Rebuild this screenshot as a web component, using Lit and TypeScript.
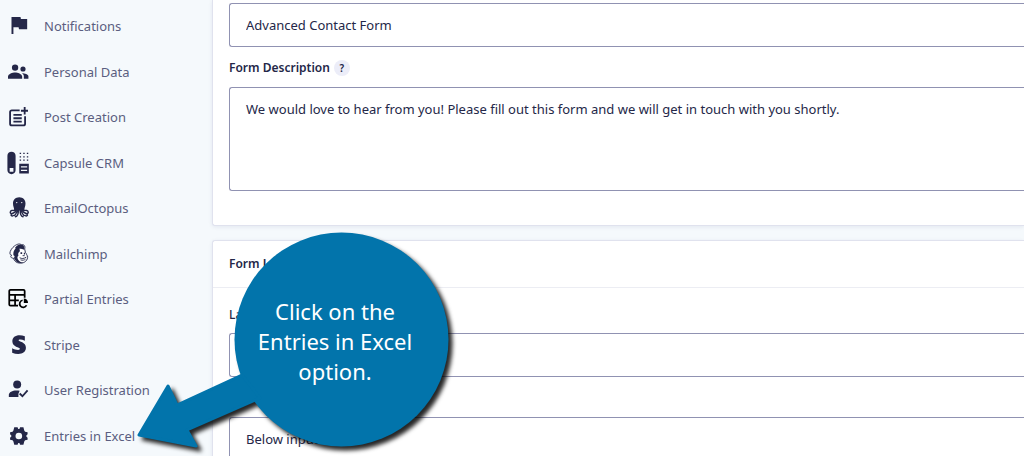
import { LitElement, html, css, svg } from "lit";
import { customElement } from "lit/decorators.js";

const icons: Record<string, unknown> = {
  flag: svg`<path d="M15.500 3.500 15 1.200H4.200v20.300h2.300v-8h6.200l.5 2.400H23V3.500z"/>`,
  people: svg`<path d="M16.670 13.130C18.040 14.060 19 15.320 19 17v3h5.500v-3c0-2.180-4.500-3.500-7.830-3.870zM8.500 10.500a3.800 3.800 0 1 0 0-7.600 3.800 3.800 0 0 0 0 7.600zM18 11.500a3.100 3.100 0 1 0 0-6.200 3.100 3.100 0 0 0 0 6.200zM8.500 12.500C5.500 12.500 0 14.200 0 17.500V20h17v-2.500c0-3.300-5.500-5-8.500-5z"/>`,
  post: svg`<g fill="none" stroke="currentColor" stroke-width="2.200"><path d="M14 4H4.500a2 2 0 0 0-2 2v14a2 2 0 0 0 2 2h14a2 2 0 0 0 2-2V11M20 0v9M15.500 4.500H24"/><path d="M6.500 9.500h10M6.500 13.500h10M6.500 17.500h10"/></g>`,
  capsule: svg`<path fill-rule="evenodd" d="M4.200-1.500C1.500-1.500-.7.500-.7 3.200v17.600c0 2.700 2.200 4.700 4.900 4.700s4.900-2 4.900-4.700V3.200c0-2.700-2.200-4.700-4.900-4.700zM2 18h4.500v4.500H2z"/><path fill="none" stroke="currentColor" stroke-width="1.500" stroke-dasharray="1.700 2.600" d="M14 .5h11M14 4.500h11M14 8.500h11"/><path fill-rule="evenodd" d="M13.500 13H25v11.500H13.500zM15.500 16v1.500H23V16zM15.500 20v1.500H23V20z"/>`,
  octopus: svg`<path d="M13.500-1C8.800-1 6 2.300 6 6.500c0 3.300 1.300 5.300 1.800 8.500h11.400c.5-3.200 1.800-5.200 1.800-8.500C21 2.300 18.200-1 13.500-1z"/><g fill="none" stroke="currentColor" stroke-width="1.700" stroke-linecap="round"><path d="M8.500 12.500c0 3.500-2 2-4 2.500s-2.500 3.500-.5 3.500M9.500 14c0 4-3 3.500-5 5s0 3.500 2 2M11 14c.5 4-2 5-3 7M12.500 14c0 4-.5 8-3.500 8.500M18.500 12.500c0 3.500 2 2 4 2.500s2.500 3.500.5 3.500M17.500 14c0 4 3 3.500 5 5s0 3.500-2 2M16 14c-.5 4 2 5 3 7M14.500 14c0 4 .5 8 3.500 8.500"/></g><circle cx="10.500" cy="5.500" r=".8" fill="#fff"/><circle cx="16.500" cy="5.500" r=".8" fill="#fff"/>`,
  mailchimp: svg`<path fill="#fff" stroke="currentColor" stroke-width="1.100" d="M4.500 13.500C.5 13 2.500 7.500 6 4c4-4 8-5 10-3 3-.8 5 1 4 5l1 4.500c1.500 1 1 2.500 2.500 4 .5 5-3.500 8.500-8.500 8.500-5 0-7.500-2.500-8.500-6-3.500 0-4-2.500-2-3.500z"/><path d="M8.500 4.500C11 1.500 14 0 16.500 1c3 .5 3.500 3 2.500 6-3-1.800-6-1.500-8 .5z"/><path d="M6.500 13.500c-.5-5 2-9 6-9.500 1.500 2 2 3.500 1.500 5-2 1.500-2 3.500-1.500 5-1.500 1-1.500 3-.5 4.500 1.500 2.500 4 3.800 7 3.500-5 2-10 0-12-5.500 1.500-.5 1-2.500-.5-3zM15 10h2v2h-2zM19 10.500h1.500v2H19z"/><path fill="none" stroke="currentColor" stroke-width="1.100" d="M14 16.500c2.500 1.300 5 1.300 8-.8M15 19c2.500.9 4.500.4 6-.8M17.500 14h2.500"/>`,
  partial: svg`<g fill="none" stroke="#000" stroke-width="2.100"><path d="M12 20H3a1.500 1.500 0 0 1-1.500-1.500V2.500A1.500 1.500 0 0 1 3 1h15.500A1.500 1.500 0 0 1 20 2.500v8M1.500 7H20M1.500 13.500H13M8.500 7v13"/><path d="M17.500 13.500a4.300 4.300 0 1 0 4.700 6"/></g><path fill="#000" d="M19 11.500c3 0 5 2.200 5 5.200h-5z"/>`,
  stripe: svg`<path d="M20.200 1.500v5.300c-2-.9-3.900-1.400-5.500-1.400-1.400 0-2 .3-2 1 0 2 8.800 1.700 8.800 9 0 4.700-3.700 7.400-9.200 7.400-2.500 0-5-.5-7.300-1.500v-5.400c2 1.100 4.800 2 7.100 2 1.500 0 2.200-.4 2.200-1.300C14.300 14.200 5.200 15 5.200 7.500 5.200 3 8.600.3 13.900.3c2.100 0 4.300.4 6.300 1.200z"/>`,
  user: svg`<circle cx="11" cy="5.500" r="4.800"/><path d="M14 13C8 11.500 1 13.600 1 18v2.500h11.500v-4z"/><path fill="none" stroke="currentColor" stroke-width="2.200" d="m14 16.200 3.300 3.300 6.200-7"/>`,
  gear: svg`<path fill-rule="evenodd" d="M7.500 1.500h4l.8 2h1.400l.8-2h4l1 4 1 1.300 3 .7v2.500L22 11.500v1L23.500 14v2.500l-3 .7-1 1.300-1 4h-4l-.8-2h-1.400l-.8 2h-4l-1-4-1-1.300-3-.7V14L4 12.500v-1L2.500 10V7.500l3-.7 1-1.300zM13 8a4 4 0 1 0 0 8 4 4 0 0 0 0-8z"/>`,
};

const items: [string, string][] = [
  ["flag", "Notifications"],
  ["people", "Personal Data"],
  ["post", "Post Creation"],
  ["capsule", "Capsule CRM"],
  ["octopus", "EmailOctopus"],
  ["mailchimp", "Mailchimp"],
  ["partial", "Partial Entries"],
  ["stripe", "Stripe"],
  ["user", "User Registration"],
  ["gear", "Entries in Excel"],
];

@customElement("settings-nav")
export class SettingsNav extends LitElement {
  static styles = css`
    :host { display: block; }
    .list {
      display: grid;
      grid-template-rows: repeat(5, 46px 45px);
      margin: 0;
      padding: 3px 0 0 8px;
      list-style: none;
    }
    .item { display: flex; }
    .link {
      display: flex;
      flex: 1;
      align-items: center;
      gap: 16px;
      color: #5b5e80;
      font-size: 13px;
      line-height: 20px;
      text-decoration: none;
      white-space: nowrap;
    }
    .icon {
      flex: none;
      width: 20px;
      height: 20px;
      overflow: visible;
      fill: currentColor;
      color: #242748;
    }
  `;

  render() {
    return html`<nav aria-label="Form settings">
      <ul class="list">
        ${items.map(
          ([icon, label]) => html`<li class="item">
            <a class="link" href="#">
              <svg class="icon" viewBox="0 0 24 24" aria-hidden="true">${icons[icon]}</svg>
              <span>${label}</span>
            </a>
          </li>`,
        )}
      </ul>
    </nav>`;
  }
}

@customElement("callout-arrow")
export class CalloutArrow extends LitElement {
  static styles = css`
    :host { display: block; width: 326px; height: 226px; pointer-events: none; }
    .shape { position: absolute; inset: 0; overflow: visible; filter: drop-shadow(4px 4px 2px rgba(0, 0, 0, 0.85)); }
    .text {
      position: absolute;
      left: 110px;
      top: 66px;
      width: 190px;
      margin: 0;
      color: #fff;
      font-size: 22px;
      line-height: 30px;
      text-align: center;
    }
  `;

  render() {
    return html`
      <svg class="shape" width="326" height="226" viewBox="0 0 326 226" fill="#0274ab" aria-hidden="true">
        <circle cx="211.500" cy="109.500" r="107" />
        <path stroke="#0274ab" stroke-width="3" stroke-linejoin="round" d="M9 205 38 156 47 175 112 145 130 168 57 200 66 216Z" />
      </svg>
      <p class="text">Click on the<br />Entries in Excel<br />option.</p>
    `;
  }
}

@customElement("app-root")
export class AppRoot extends LitElement {
  static styles = css`
    :host {
      display: block;
      position: relative;
      height: 100vh;
      overflow: hidden;
      background: #f5f9fc;
      color: #242748;
      font-family: "Noto Sans", "Open Sans", sans-serif;
      font-size: 13px;
      line-height: 20px;
    }
    .layout { display: grid; grid-template-columns: 212px 1fr; }
    .main { display: flex; flex-direction: column; gap: 14px; min-width: 0; }
    .card {
      border: solid #e0e2ee;
      border-width: 1px 0 1px 1px;
      border-radius: 3px 0 0 3px;
      background: #fff;
      box-shadow: 0 1px 4px rgba(18, 25, 97, 0.08);
    }
    .card.first { border-top: 0; border-radius: 0 0 0 3px; }
    .fields { display: flex; flex-direction: column; padding: 17px 0 34px 16px; }
    .first .fields { padding-top: 3px; }
    .title {
      margin: 0;
      padding: 13px 16px;
      border-bottom: 1px solid #ecedf3;
      font-size: 12px;
      font-weight: 600;
      line-height: 20px;
    }
    .caption { display: flex; align-items: center; gap: 4px; height: 20px; margin: 11px 0 9px; font-size: 12px; font-weight: 600; }
    .caption.lead { margin-top: 0; margin-bottom: 8px; font-weight: 500; }
    .help {
      width: 16px;
      height: 16px;
      padding: 0;
      border: 0;
      border-radius: 8px;
      background: #ecedf8;
      color: #242748;
      font: 600 10px/16px "Noto Sans", sans-serif;
    }
    .field {
      box-sizing: border-box;
      display: block;
      width: 100%;
      height: 44px;
      margin: 0;
      padding: 0 16px;
      border: solid #9092b2;
      border-width: 1px 0 1px 1px;
      border-radius: 3px 0 0 3px;
      outline: 0;
      appearance: none;
      background: #fff;
      color: #242748;
      font: inherit;
    }
    .area { height: 104px; padding-top: 11px; resize: none; }
    .callout { position: absolute; left: 130px; top: 230px; }
  `;

  render() {
    return html`
      <div class="layout">
        <settings-nav></settings-nav>
        <main class="main">
          <section class="card first">
            <div class="fields">
              <input class="field" aria-label="Form Title" value="Advanced Contact Form" />
              <div class="caption">
                <label for="description">Form Description</label>
                <button class="help" aria-label="About the form description">?</button>
              </div>
              <textarea class="field area" id="description" .value=${"We would love to hear from you! Please fill out this form and we will get in touch with you shortly."}></textarea>
            </div>
          </section>
          <section class="card">
            <h2 class="title">Form Layout</h2>
            <div class="fields">
              <label class="caption lead" for="label">Label</label>
              <select class="field" id="label"><option></option></select>
              <label class="caption" for="sublabel">Sub-Label</label>
              <select class="field" id="sublabel"><option>Below inputs</option></select>
            </div>
          </section>
        </main>
      </div>
      <callout-arrow class="callout"></callout-arrow>
    `;
  }
}
